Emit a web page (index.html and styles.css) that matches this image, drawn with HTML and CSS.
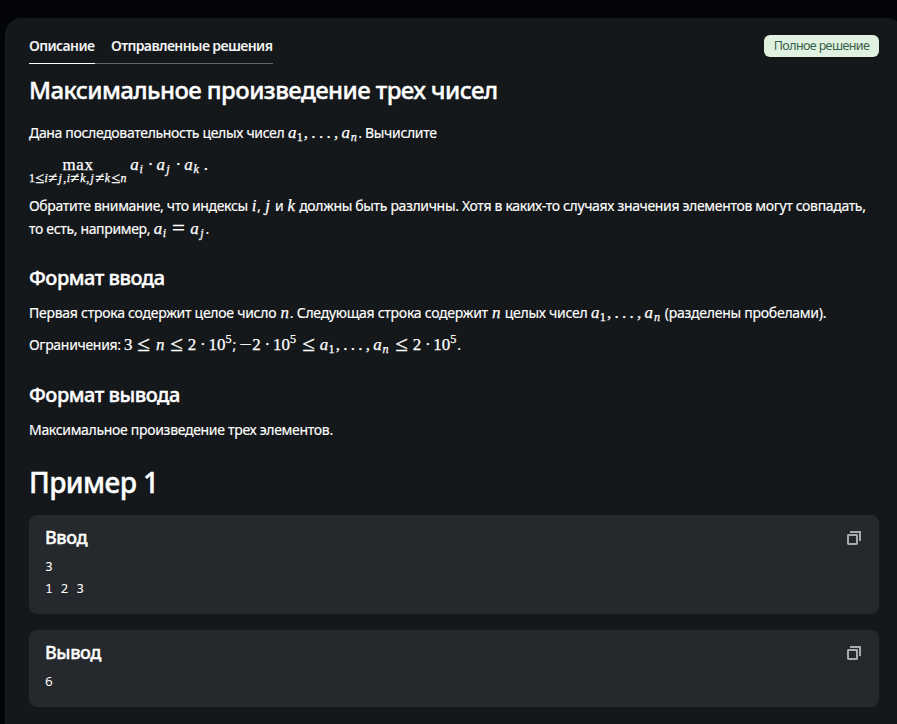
FILE: index.html
```html
<!DOCTYPE html>
<html lang="ru">
<head>
<meta charset="utf-8">
<title>Максимальное произведение трех чисел</title>
<link rel="stylesheet" href="styles.css">
</head>
<body>
<main class="panel">
  <header class="top">
    <nav class="tabs">
      <a class="tab tab-active">Описание</a>
      <a class="tab tab-wide">Отправленные решения</a>
    </nav>
    <span class="badge">Полное решение</span>
  </header>
  <h1 class="title">Максимальное произведение трех чисел</h1>
  <p class="para intro">Дана последовательность целых чисел <span class="m"><i class="a">a</i><sub><b>1</b></sub><b class="c">,</b><b class="c">.</b><b class="c">.</b><b class="c">.</b><b class="c">,</b><i class="a">a</i><sub><i class="n">n</i></sub></span>. Вычислите</p>
  <div class="display">
    <span class="limit"><span class="op">max</span><span class="under"><b>1</b><b class="r">≤</b><i class="i">i</i><b class="r">≠</b><i class="j">j</i><b class="p">,</b><i class="i">i</i><b class="r">≠</b><i class="k">k</i><b class="p">,</b><i class="j">j</i><b class="r">≠</b><i class="k">k</i><b class="r">≤</b><i class="n">n</i></span></span>
    <span class="m"><i class="a">a</i><sub><i class="i">i</i></sub><b class="dot">·</b><i class="a">a</i><sub><i class="j">j</i></sub><b class="dot">·</b><i class="a">a</i><sub><i class="k">k</i></sub><b class="p end">.</b></span>
  </div>
  <p class="para note">Обратите внимание, что индексы <span class="m"><i class="i">i</i></span>, <span class="m"><i class="j">j</i></span> и <span class="m"><i class="k">k</i></span> должны быть различны. Хотя в каких-то случаях значения элементов могут совпадать,<br>то есть, например, <span class="m"><i class="a">a</i><sub><i class="i">i</i></sub><b class="rel">=</b><i class="a">a</i><sub><i class="j">j</i></sub></span>.</p>
  <h2 class="sub">Формат ввода</h2>
  <p class="para input">Первая строка содержит целое число <span class="m"><i class="n">n</i></span>. Следующая строка содержит <span class="m"><i class="n">n</i></span> целых чисел <span class="m"><i class="a">a</i><sub><b>1</b></sub><b class="c">,</b><b class="c">.</b><b class="c">.</b><b class="c">.</b><b class="c">,</b><i class="a">a</i><sub><i class="n">n</i></sub></span> (разделены пробелами).</p>
  <p class="para limits">Ограничения: <span class="m"><b>3</b><b class="rel">≤</b><i class="n">n</i><b class="rel">≤</b><b>2</b><b class="dot">·</b><b>1</b><b>0</b><sup><b>5</b></sup></span>; <span class="m"><b class="r minus">−</b><b>2</b><b class="dot">·</b><b>1</b><b>0</b><sup><b>5</b></sup><b class="rel">≤</b><i class="a">a</i><sub><b>1</b></sub><b class="c">,</b><b class="c">.</b><b class="c">.</b><b class="c">.</b><b class="c">,</b><i class="a">a</i><sub><i class="n">n</i></sub><b class="rel">≤</b><b>2</b><b class="dot">·</b><b>1</b><b>0</b><sup><b>5</b></sup></span>.</p>
  <h2 class="sub">Формат вывода</h2>
  <p class="para">Максимальное произведение трех элементов.</p>
  <h1 class="example">Пример 1</h1>
  <section class="card">
    <div>
      <h3>Ввод</h3>
      <pre>3
1 2 3</pre>
    </div>
    <svg class="copy" viewBox="0 0 14 14"><path d="M3 1h10v9"/><rect x="1" y="4" width="9" height="9" rx=".4"/></svg>
  </section>
  <section class="card">
    <div>
      <h3>Вывод</h3>
      <pre>6</pre>
    </div>
    <svg class="copy" viewBox="0 0 14 14"><path d="M3 1h10v9"/><rect x="1" y="4" width="9" height="9" rx=".4"/></svg>
  </section>
</main>
</body>
</html>
```
FILE: styles.css
```css
* { box-sizing: border-box; }

html, body { height: 100%; }

body {
  margin: 0;
  padding: 18px 0 0 5px;
  overflow: hidden;
  background: #02040a;
  color: #fff;
  font: 14px/23px "Noto Sans", sans-serif;
}

.panel {
  width: 898px;
  height: 730px;
  padding: 16px 24px 0;
  border-radius: 16px;
  background: #14181a;
}

.top {
  display: flex;
  justify-content: space-between;
  align-items: flex-start;
  height: 30px;
}

.tabs {
  display: flex;
  gap: 16px;
  height: 30px;
  border-bottom: 1px solid #63676a;
  color: #f3f3f4;
  font-weight: 600;
  line-height: 24px;
  letter-spacing: -0.6px;
  white-space: nowrap;
}

.tab { width: 66px; height: 30px; }
.tab-wide { width: 162px; }
.tab-active { border-bottom: 1px solid #fff; }

.badge {
  width: 115px;
  height: 22px;
  margin-top: 1px;
  border-radius: 6px;
  background: #e0f2df;
  color: #38604a;
  font-size: 12.5px;
  line-height: 21px;
  letter-spacing: -0.62px;
  text-align: center;
  white-space: nowrap;
}

h1, h2, h3 { -webkit-text-stroke: 0.4px currentColor; }

.title {
  margin: 10px 0 15px;
  font-size: 24px;
  font-weight: 500;
  line-height: 32px;
  letter-spacing: -0.58px;
}

.para {
  margin: 0;
  letter-spacing: -0.31px;
  white-space: nowrap;
  -webkit-text-stroke: 0.15px currentColor;
}

.intro { letter-spacing: -0.33px; }
.note { letter-spacing: -0.34px; }
.input { letter-spacing: -0.26px; }

/* Formulas: each symbol sits in a box with its own advance width. */
.m, .op, .under {
  font-family: "Liberation Serif", serif;
  font-size: 16.94px;
  letter-spacing: 0;
}

.m { line-height: 0; }
.m, .under, .op { -webkit-text-stroke: 0.25px currentColor; }

.m i, .m b, .under i, .under b {
  display: inline-block;
  width: 0.5em;
  font-weight: 400;
  line-height: 0;
  text-align: center;
}

.m .a { width: 0.529em; }
.m .i, .under .i { width: 0.345em; }
.m .j, .under .j { width: 0.469em; }
.m .k, .under .k { width: 0.551em; }
.m .n, .under .n { width: 0.6em; }
.m .p, .under .p { width: 0.278em; }
.m .c { width: 0.278em; margin-right: 0.1667em; }
.m .dot { width: 0.278em; margin: 0 0.222em; }
.m .r, .under .r { width: 0.778em; transform: scale(1.35, 1.3); }
.m .rel { width: 0.778em; margin: 0 0.2778em; transform: scale(1.35, 1.25); }
.m .minus { transform: scaleX(1.3); }
.m .end { margin-left: 0.17em; }

.m sub, .m sup {
  margin-right: 0.0714em;
  font-size: 0.72em;
  line-height: 0;
}

.m sub { vertical-align: -2.6px; }
.m sup { vertical-align: 6.6px; }

.display {
  display: flex;
  align-items: baseline;
  gap: 3px;
  height: 37px;
  margin-top: 13px;
}

.display .m { line-height: 16px; }

.limit {
  display: flex;
  flex-direction: column;
  align-items: center;
}

.op { line-height: 16px; letter-spacing: 0.7px; }
.under { font-size: 11.86px; line-height: 10px; white-space: nowrap; }

.sub {
  margin: 24px 0 9px;
  font-size: 20px;
  font-weight: 500;
  line-height: 28px;
  letter-spacing: -0.48px;
}

.limits { margin-top: 9px; line-height: 24px; }

.example {
  margin: 23px 0 15px;
  font-size: 28px;
  font-weight: 500;
  line-height: 36px;
  letter-spacing: -0.6px;
}

.card {
  display: flex;
  justify-content: space-between;
  align-items: flex-start;
  margin-bottom: 16px;
  padding: 10px 18px 15px 16px;
  border-radius: 8px;
  background: #25282c;
}

h3 {
  margin: 0 0 6px;
  font-size: 18px;
  font-weight: 500;
  line-height: 24px;
  letter-spacing: -0.4px;
}

pre {
  margin: 0;
  font: 13px/22px "Noto Sans Mono", "DejaVu Sans Mono", monospace;
}

.copy {
  width: 14px;
  height: 14px;
  margin-top: 6px;
  fill: none;
  stroke: #a8aaac;
  stroke-width: 2;
}
```
